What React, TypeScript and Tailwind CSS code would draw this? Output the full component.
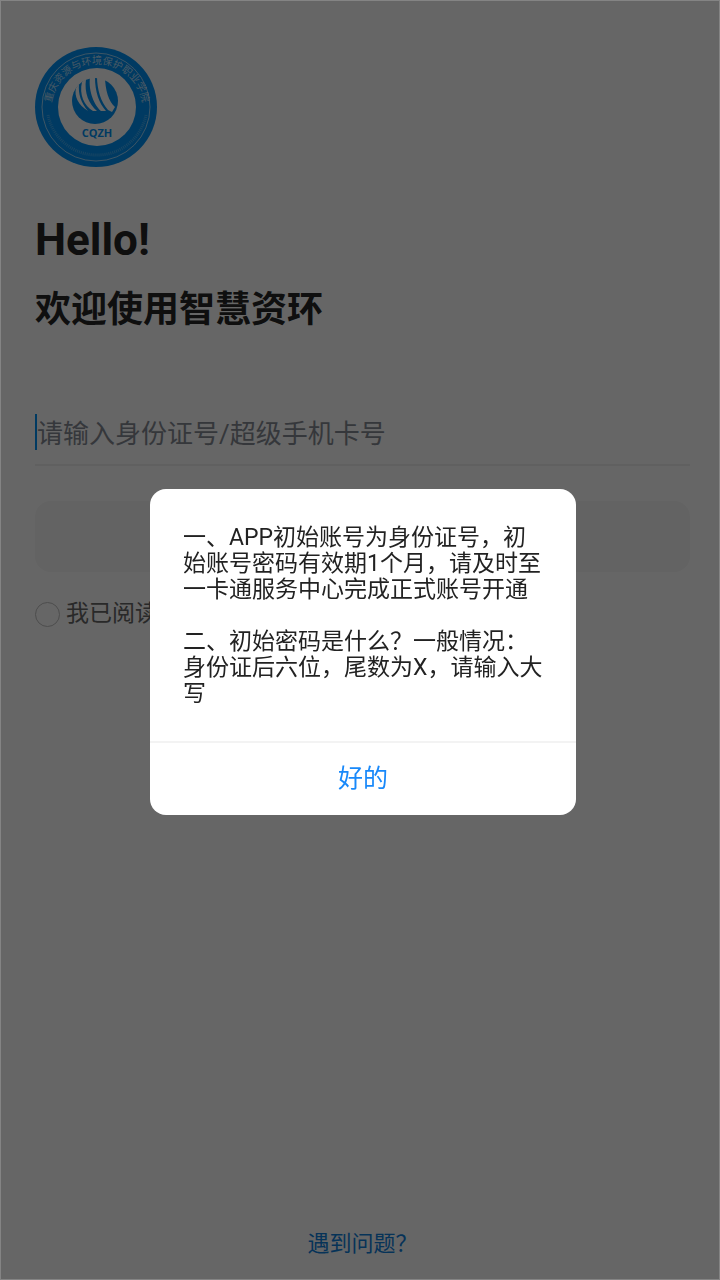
import { useState } from 'react'

function SchoolLogo() {
  return (
    <svg viewBox="0 0 124 122" className="w-[124px] h-[122px]" role="img" aria-label="CQZH">
      <defs>
        <path id="ring-top" d="M 16 64 A 46 46 0 1 1 108 64" />
      </defs>
      <ellipse cx="61" cy="61" rx="61" ry="60" fill="#0092f4" />
      <circle cx="61" cy="61" r="54" fill="none" stroke="#fff" strokeOpacity="0.6" strokeWidth="1" />
      <circle cx="62" cy="61" r="39" fill="#fff" />
      <text
        fontSize="10"
        fill="#fff"
        fillOpacity="0.7"
        textAnchor="middle"
        className="font-['Noto_Sans_CJK_SC',sans-serif]"
      >
        <textPath href="#ring-top" startOffset="50%">
          重庆资源与环境保护职业学院
        </textPath>
      </text>
      <path
        d="M 13 69 A 50 50 0 0 0 111 69"
        fill="none"
        stroke="#fff"
        strokeOpacity="0.25"
        strokeWidth="3"
        strokeDasharray="1 1"
      />
      <circle cx="60" cy="55" r="23" fill="#0092f4" />
      <path d="M41 42 C39 50 43 59 53 65 C46 57 43 48 44 38 Z" fill="#fff" />
      <path d="M47 36 C44 48 49 60 58 65 L62 65 C54 58 49 47 51 33 Z" fill="#fff" />
      <path d="M55 31 C53 46 60 60 66 65 L71 65 C64 57 60 46 60 31 Z" fill="#fff" />
      <path d="M62 30 L70 30 C70 44 74 56 80 61 L77 66 L73 64 C66 56 62 44 62 30 Z" fill="#fff" />
      <text
        x="62"
        y="91"
        fontSize="11"
        fontWeight="700"
        fill="#0092f4"
        textAnchor="middle"
        className="font-['Open_Sans',sans-serif]"
      >
        CQZH
      </text>
    </svg>
  )
}

function LoginPage() {
  return (
    <main className="min-h-screen flex flex-col pl-[35px] pr-[30px] pt-[46px] pb-[18px] bg-white">
      <SchoolLogo />
      <h1 className="mt-12 text-[44px] leading-[48px] font-bold text-[#262626]">Hello!</h1>
      <p className="mt-[22px] text-4xl leading-[48px] font-bold text-[#262626]">欢迎使用智慧资环</p>

      <form className="mt-20 flex flex-col">
        <div className="flex items-center pb-[14px] border-b-2 border-[#f0f0f0]">
          <span className="w-0.5 h-9 bg-[#0092f4]"></span>
          <input
            type="text"
            aria-label="请输入身份证号/超级手机卡号"
            placeholder="请输入身份证号/超级手机卡号"
            className="flex-1 h-9 pt-1 text-[26px] outline-none placeholder:text-[#868b93]"
          />
        </div>
        <button type="button" aria-label="登录" className="mt-[35px] h-[71px] rounded-2xl bg-[#f7f7f7]"></button>
        <label className="mt-6 flex items-center gap-1.5 text-[23px] leading-9 text-[#666]">
          <input
            type="checkbox"
            className="appearance-none size-[25px] rounded-full border border-[#c0c0c0]"
          />
          我已阅读
        </label>
      </form>

      <a href="#help" className="mt-auto self-center text-[22px] leading-9 text-[#1181dc]">
        遇到问题？
      </a>
    </main>
  )
}

export default function App() {
  const [open, setOpen] = useState(true)

  return (
    <div lang="zh-CN" className="font-['Roboto','Noto_Sans_CJK_SC',sans-serif]">
      <LoginPage />
      {open && (
        <div className="fixed inset-0 flex items-center justify-center pl-1.5 pt-6 bg-black/60 border border-[#848484] bg-clip-padding">
          <div role="dialog" aria-modal="true" className="w-[426px] rounded-2xl bg-white overflow-hidden">
            <div className="px-[33px] pt-9 pb-[34px] text-[23px] leading-[26px] text-[#222]">
              <p>一、APP初始账号为身份证号，初始账号密码有效期1个月，请及时至一卡通服务中心完成正式账号开通</p>
              <p className="mt-[26px]">二、初始密码是什么？一般情况：身份证后六位，尾数为X，请输入大写</p>
            </div>
            <button
              type="button"
              onClick={() => setOpen(false)}
              className="w-full h-[74px] border-t-2 border-[#f3f3f3] text-[25px] text-[#1989fa]"
            >
              好的
            </button>
          </div>
        </div>
      )}
    </div>
  )
}
